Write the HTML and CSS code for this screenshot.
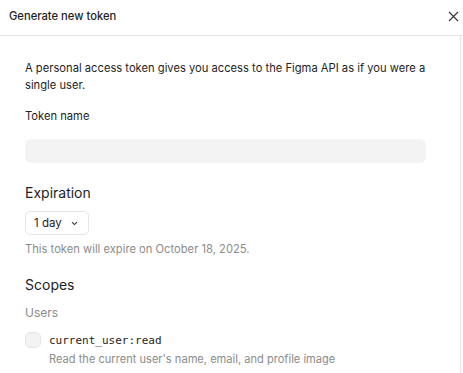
FILE: index.html
```html
<!DOCTYPE html>
<html lang="en">
<head>
    <meta charset="UTF-8">
    <meta name="viewport" content="width=device-width, initial-scale=1.0">
    <title>Generate new token</title>
    <link rel="stylesheet" href="styles.css">
</head>
<body>
    <div class="modal">
        <div class="modal-header">
            <div class="modal-title">Generate new token</div>
            <button class="close" aria-label="Close">
                <svg width="11" height="11" viewBox="0 0 11 11">
                    <path d="M1 1L10 10M10 1L1 10" stroke="#333" stroke-width="1.1" fill="none"/>
                </svg>
            </button>
        </div>
        <div class="modal-body">
            <div class="content">
                <p class="intro">A personal access token gives you access to the Figma API as if you were a single user.</p>

                <label class="field-label" for="token-name">Token name</label>
                <input class="text-input" id="token-name" type="text">

                <h2 class="section-title">Expiration</h2>
                <div class="select">
                    <span>1 day</span>
                    <svg width="7" height="5" viewBox="0 0 7 5">
                        <path d="M1 1.2L3.5 3.6L6 1.2" stroke="#333" stroke-width="1.1" fill="none"/>
                    </svg>
                </div>
                <p class="hint">This token will expire on October 18, 2025.</p>

                <h2 class="section-title scopes">Scopes</h2>
                <div class="group-label">Users</div>
                <div class="scope">
                    <div class="checkbox"></div>
                    <div class="scope-text">
                        <div class="scope-name">current_user:read</div>
                        <div class="scope-desc">Read the current user's name, email, and profile image</div>
                    </div>
                </div>
            </div>
            <div class="scrollbar"></div>
        </div>
    </div>
</body>
</html>
```

FILE: styles.css
```css
body {
    margin: 0;
    font-family: 'Inter', 'Noto Sans', sans-serif;
    background-color: #fff;
    color: #1e1e1e;
}

.modal {
    width: 463px;
    height: 373px;
    display: flex;
    flex-direction: column;
    overflow: hidden;
}

.modal-header {
    height: 35px;
    display: flex;
    align-items: center;
    justify-content: space-between;
    padding: 0 0 0 9px;
    border-bottom: 1px solid #e6e6e6;
    flex-shrink: 0;
}

.modal-title {
    font-size: 11.2px;
    font-weight: 500;
    margin-top: -3px;
}

.close {
    border: none;
    background: none;
    padding: 0;
    width: 20px;
    height: 20px;
    display: flex;
    align-items: center;
    justify-content: center;
    margin-top: -3px;
}

.modal-body {
    flex: 1;
    display: flex;
}

.content {
    flex: 1;
    padding: 0 34px 0 25px;
}

.scrollbar {
    width: 3px;
    border-left: 1px solid #e6e6e6;
    background-color: #fbfbfb;
}

.intro {
    font-size: 11.2px;
    line-height: 17px;
    margin: 24px 0 0;
}

.field-label {
    display: block;
    font-size: 11.2px;
    line-height: 17px;
    margin-top: 14px;
}

.text-input {
    display: block;
    box-sizing: border-box;
    width: 401px;
    height: 24px;
    margin-top: 14px;
    border: none;
    border-radius: 6px;
    background-color: #f3f3f3;
    outline: none;
}

.section-title {
    font-size: 14px;
    font-weight: 400;
    line-height: 18px;
    margin: 21px 0 0;
}

.select {
    display: inline-flex;
    align-items: center;
    gap: 9px;
    box-sizing: border-box;
    height: 24px;
    margin-top: 9px;
    padding: 0 10px 0 8px;
    border: 1px solid #e6e6e6;
    border-radius: 5px;
    font-size: 11.5px;
}

.hint {
    font-size: 11.2px;
    line-height: 17px;
    color: #8c8c8c;
    margin: 6px 0 0;
}

.section-title.scopes {
    margin-top: 18px;
}

.group-label {
    font-size: 12px;
    line-height: 17px;
    color: #8c8c8c;
    margin-top: 10px;
}

.scope {
    display: flex;
    gap: 8px;
    margin-top: 11px;
}

.checkbox {
    width: 16px;
    height: 16px;
    box-sizing: border-box;
    border: 1px solid #e6e6e6;
    border-radius: 5px;
    background-color: #f3f3f3;
    flex-shrink: 0;
}

.scope-name {
    font-family: 'DejaVu Sans Mono', monospace;
    font-size: 11px;
    line-height: 18px;
}

.scope-desc {
    font-size: 11.1px;
    line-height: 17px;
    color: #8c8c8c;
    margin-top: 1px;
}
```
